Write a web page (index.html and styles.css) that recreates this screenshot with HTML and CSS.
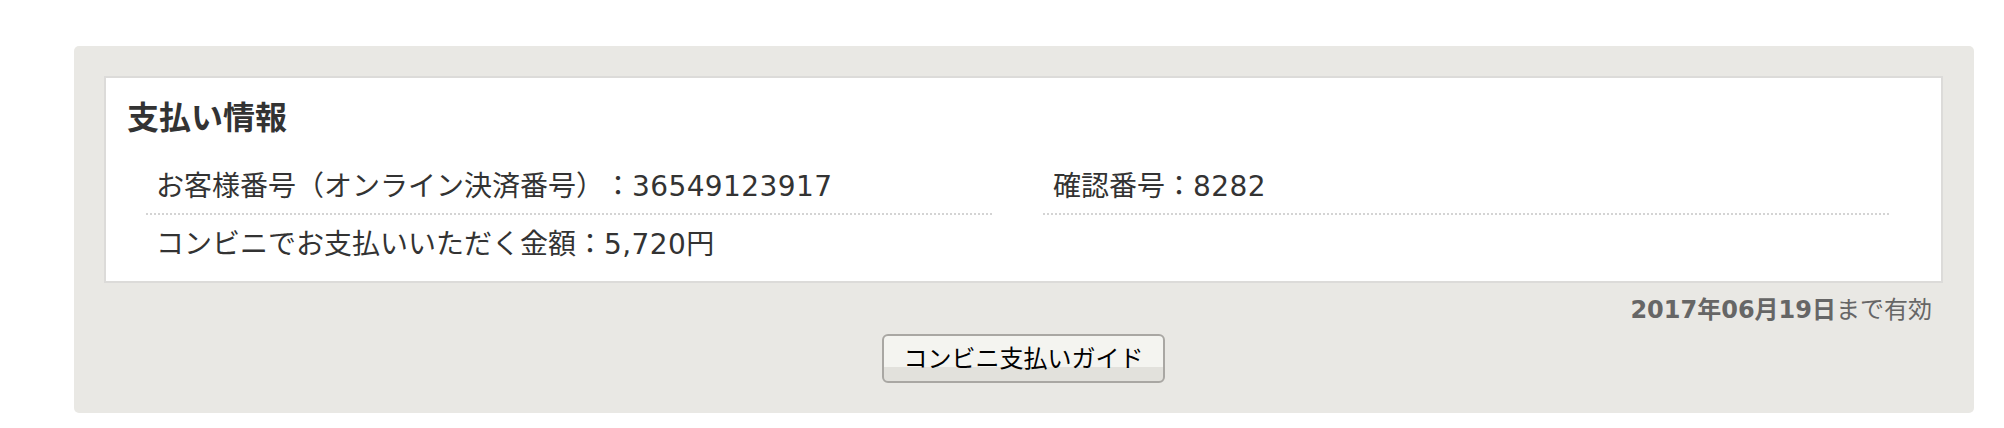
FILE: index.html
```html
<!DOCTYPE html>
<html lang="ja">
<head>
<meta charset="utf-8">
<title>支払い情報</title>
<link rel="stylesheet" href="styles.css">
</head>
<body>
<div class="panel">
  <section class="info">
    <h2 class="info-title">支払い情報</h2>
    <ul class="info-list">
      <li class="info-item sep">お客様番号（オンライン決済番号）：<span class="num">36549123917</span></li>
      <li class="info-item sep">確認番号：<span class="num">8282</span></li>
      <li class="info-item">コンビニでお支払いいただく金額：<span class="num">5,720</span>円</li>
    </ul>
  </section>
  <p class="expire"><b class="expire-date"><span class="num-b">2017</span>年<span class="num-b">06</span>月<span class="num-b">19</span>日</b>まで有効</p>
  <div class="actions">
    <button class="guide-btn" type="button">コンビニ支払いガイド</button>
  </div>
</div>
</body>
</html>
```
FILE: styles.css
```css
html, body {
  background: #ffffff;
}
body {
  margin: 46px 30px 15px 74px;
  font-family: "Noto Sans CJK JP", sans-serif;
  color: #333333;
  text-spacing-trim: space-all;
}
.panel {
  background: #e9e8e4;
  border-radius: 5px;
  padding: 30px 31px 30px 30px;
}
.info {
  background: #ffffff;
  border: 2px solid #dcdbd9;
  padding: 17px 20px 10px 21px;
}
.info-title {
  margin: 0 0 22px;
  font-size: 32px;
  line-height: 40px;
  font-weight: bold;
  color: #333333;
}
.info-list {
  display: grid;
  grid-template-columns: 846px 846px;
  column-gap: 51px;
  list-style: none;
  margin: 0 0 0 19px;
  padding: 0;
}
.info-item {
  height: 40px;
  padding: 7px 0 9px 10px;
  font-size: 28px;
  line-height: 40px;
  white-space: nowrap;
}
.info-item.sep {
  border-bottom: 2px dotted #d4d4d4;
}
.num {
  font-family: "DejaVu Sans", "Noto Sans CJK JP", sans-serif;
  font-size: 28px;
  line-height: 1;
  letter-spacing: 0.4px;
}
.expire {
  height: 30px;
  margin: 10px 11px 11px 0;
  text-align: right;
  font-size: 24px;
  line-height: 30px;
  color: #666666;
}
.expire-date {
  font-weight: bold;
}
.num-b {
  font-family: "DejaVu Sans", "Noto Sans CJK JP", sans-serif;
  font-size: 24px;
  line-height: 1;
}
.actions {
  display: flex;
  justify-content: center;
}
.guide-btn {
  width: 283px;
  height: 49px;
  padding: 0 0 4px;
  border: 2px solid #a9a7a3;
  border-radius: 6px;
  background: linear-gradient(#f4f4f0 0, #f4f4f0 68%, #e2e1dc 68%, #e2e1dc 100%);
  font-family: "Noto Sans CJK JP", sans-serif;
  font-size: 24px;
  line-height: 30px;
  color: #000000;
}
```
